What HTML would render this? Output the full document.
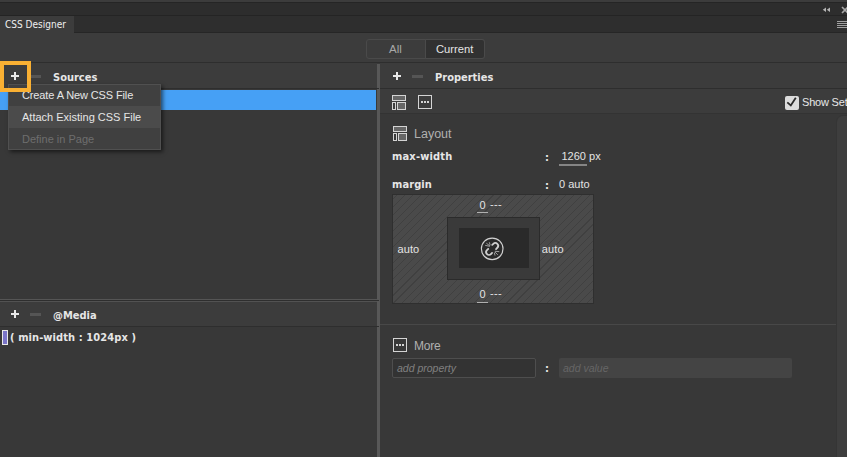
<!DOCTYPE html>
<html><head><meta charset="utf-8"><title>CSS Designer</title>
<style>
html,body{margin:0;padding:0}
body{width:847px;height:457px;overflow:hidden;position:relative;background:#3a3a3a;font-family:"Liberation Sans",sans-serif;font-size:11px;color:#d8d8d8}
.a{position:absolute}
.t{position:absolute;white-space:pre;line-height:14px;height:14px}
.b{font-family:"DejaVu Sans Condensed","DejaVu Sans",sans-serif;font-weight:700;font-stretch:condensed;font-size:11px;color:#e6e6e6}
.plus{position:absolute;width:8px;height:8px}
.plus:before{content:"";position:absolute;left:3px;top:0;width:2px;height:8px;background:#e8e8e8}
.plus:after{content:"";position:absolute;left:0;top:3px;width:8px;height:2px;background:#e8e8e8}
.minus{position:absolute;width:11px;height:3px;background:#555}
</style></head><body>
<!-- top chrome -->
<div class="a" style="left:0;top:0;width:847px;height:2px;background:#3c3c3c"></div>
<div class="a" style="left:0;top:2px;width:847px;height:1px;background:#252525"></div>
<div class="a" style="left:0;top:3px;width:847px;height:12px;background:#2d2d2d"></div>
<div class="a" style="left:0;top:15px;width:847px;height:1px;background:#242424"></div>
<div class="a" style="left:0;top:16px;width:847px;height:16px;background:#2e2e2e"></div>
<div class="a" style="left:0;top:32px;width:847px;height:1px;background:#262626"></div>
<div class="a" style="left:0;top:16px;width:74px;height:17px;background:#3c3c3c"></div>
<div class="t" style="left:5px;top:18px;font-family:'DejaVu Sans Condensed','DejaVu Sans',sans-serif;font-stretch:condensed;font-size:10px;color:#f0f0f0">CSS Designer</div>
<!-- collapse / close icons -->
<svg class="a" style="left:820px;top:5px" width="27" height="10" viewBox="0 0 27 10">
<path d="M6 2.6 L2.8 4.8 L6 7 Z M10 2.6 L6.8 4.8 L10 7 Z" fill="#b4b4b4"/>
<path d="M22 2 L28 8 M28 2 L22 8" stroke="#a8a8a8" stroke-width="1.6" fill="none"/>
</svg>
<div class="a" style="left:837px;top:21px;width:10px;height:1px;background:#a0a0a0;box-shadow:0 2px 0 #a0a0a0,0 4px 0 #a0a0a0,0 6px 0 #a0a0a0"></div>

<!-- main bg -->
<div class="a" style="left:0;top:33px;width:847px;height:29px;background:#3c3c3c"></div>
<!-- toggle -->
<div class="a" style="left:366px;top:39px;width:119px;height:20px;box-sizing:border-box;border:1px solid #4a4a4a;border-radius:3px;background:#3c3c3c"></div>
<div class="a" style="left:425px;top:39px;width:60px;height:20px;box-sizing:border-box;border:1px solid #4a4a4a;border-radius:0 3px 3px 0;background:#313131"></div>
<div class="t" style="left:389px;top:42px;font-size:11.5px;color:#a8a8a8">All</div>
<div class="t" style="left:436px;top:42px;font-size:11.2px;color:#e4e4e4">Current</div>

<!-- horizontal line under toggle -->
<div class="a" style="left:0;top:62px;width:847px;height:1px;background:#2e2e2e"></div>

<!-- LEFT: sources -->
<div class="a" style="left:0;top:63px;width:377px;height:25px;background:#3c3c3c"></div>
<div class="a" style="left:0;top:88px;width:377px;height:1px;background:#2e2e2e"></div>
<div class="a" style="left:0;top:89px;width:377px;height:210px;background:#383838"></div>
<div class="a" style="left:0;top:90px;width:376px;height:20px;background:#46a0f5"></div>
<div class="plus" style="left:11px;top:72px"></div>
<div class="minus" style="left:30px;top:75px"></div>
<div class="t b" style="left:53px;top:71px">Sources</div>

<!-- horizontal splitter -->
<div class="a" style="left:0;top:299px;width:377px;height:1px;background:#555"></div>
<div class="a" style="left:0;top:300px;width:377px;height:1px;background:#2e2e2e"></div>
<div class="a" style="left:0;top:301px;width:377px;height:1px;background:#525252"></div>
<!-- media -->
<div class="a" style="left:0;top:302px;width:377px;height:24px;background:#3c3c3c"></div>
<div class="a" style="left:0;top:326px;width:377px;height:1px;background:#2e2e2e"></div>
<div class="a" style="left:0;top:327px;width:377px;height:130px;background:#383838"></div>
<div class="plus" style="left:11px;top:310px"></div>
<div class="minus" style="left:30px;top:313px"></div>
<div class="t b" style="left:53px;top:309px">@Media</div>
<div class="a" style="left:2px;top:330px;width:6px;height:15px;box-sizing:border-box;border:1px solid #e8e8e8;background:#7a74c8"></div>
<div class="t b" style="left:10px;top:331px;font-size:11px;letter-spacing:0.09px">( min-width : 1024px )</div>

<!-- vertical splitter -->
<div class="a" style="left:377px;top:64px;width:3px;height:393px;background:#585858"></div>
<div class="a" style="left:377px;top:300px;width:2px;height:1px;background:#2e2e2e"></div>
<div class="a" style="left:377px;top:88px;width:2px;height:1px;background:#2e2e2e"></div>
<div class="a" style="left:377px;top:326px;width:2px;height:1px;background:#2e2e2e"></div>

<!-- RIGHT: properties -->
<div class="a" style="left:380px;top:63px;width:467px;height:25px;background:#3c3c3c"></div>
<div class="a" style="left:380px;top:88px;width:467px;height:1px;background:#2e2e2e"></div>
<div class="a" style="left:380px;top:89px;width:467px;height:24px;background:#3c3c3c"></div>
<div class="a" style="left:380px;top:113px;width:467px;height:1px;background:#333"></div>
<div class="a" style="left:380px;top:114px;width:467px;height:343px;background:#383838"></div>
<div class="plus" style="left:393px;top:72px"></div>
<div class="minus" style="left:412px;top:75px"></div>
<div class="t b" style="left:435px;top:71px">Properties</div>

<!-- icons row -->
<svg class="a" style="left:392px;top:95px" width="15" height="16" viewBox="0 0 15 16">
<rect x="0.5" y="0.5" width="13" height="5" fill="#666" stroke="#d4d4d4"/>
<rect x="0.5" y="7.5" width="3" height="7" fill="#3c3c3c" stroke="#d4d4d4"/>
<rect x="5.5" y="7.5" width="8" height="7" fill="#666" stroke="#d4d4d4"/>
</svg>
<svg class="a" style="left:418px;top:95px" width="14" height="14" viewBox="0 0 14 14">
<rect x="0.5" y="0.5" width="13" height="13" fill="none" stroke="#d4d4d4"/>
<rect x="3" y="6" width="2" height="2" fill="#d4d4d4"/><rect x="6" y="6" width="2" height="2" fill="#d4d4d4"/><rect x="9" y="6" width="2" height="2" fill="#d4d4d4"/>
</svg>
<!-- checkbox -->
<div class="a" style="left:785px;top:96px;width:14px;height:14px;border-radius:2px;background:#dcdcdc"></div>
<svg class="a" style="left:785px;top:96px" width="14" height="14" viewBox="0 0 14 14"><path d="M2.3 6.4 L5.8 9.5 L10.8 1.8" stroke="#2a2a2a" stroke-width="1.8" fill="none"/></svg>
<div class="t" style="left:802px;top:95px;font-size:11px;letter-spacing:-0.2px;color:#e8e8e8">Show Set</div>

<!-- scrollbar -->
<div class="a" style="left:836px;top:115px;width:11px;height:342px;background:#353535;border-radius:7px 0 0 0"></div>
<div class="a" style="left:837px;top:116px;width:10px;height:341px;background:#3e3e3e;border-radius:6px 0 0 0"></div>

<!-- Layout section -->
<svg class="a" style="left:393px;top:126px" width="15" height="16" viewBox="0 0 15 16">
<rect x="0.5" y="0.5" width="13" height="5" fill="#666" stroke="#d4d4d4"/>
<rect x="0.5" y="7.5" width="3" height="7" fill="#383838" stroke="#d4d4d4"/>
<rect x="5.5" y="7.5" width="8" height="7" fill="#666" stroke="#d4d4d4"/>
</svg>
<div class="t" style="left:414px;top:127px;font-size:12.5px;color:#b0b0b0">Layout</div>
<div class="t b" style="left:392px;top:150px;font-size:11px;letter-spacing:0.18px">max-width</div>
<div class="t b" style="left:545px;top:151px">:</div>
<div class="t" style="left:561.5px;top:149px;color:#e4e4e4">1260 px</div>
<div class="a" style="left:559px;top:164px;width:28px;height:2px;background:#858585"></div>
<div class="t b" style="left:392px;top:178px;font-size:11px;letter-spacing:0.1px">margin</div>
<div class="t b" style="left:545px;top:179px">:</div>
<div class="t" style="left:559px;top:177px;color:#e4e4e4">0 auto</div>

<!-- margin box -->
<div class="a" style="left:392px;top:194px;width:202px;height:110px;box-sizing:border-box;border:1px solid #2f2f2f;background:repeating-linear-gradient(135deg,#4a4a4a 0,#4a4a4a 2.146px,#404040 2.146px,#404040 2.946px,#4a4a4a 2.946px,#4a4a4a 5.706px)"></div>
<div class="a" style="left:447px;top:217px;width:93px;height:63px;box-sizing:border-box;border:1px solid #2b2b2b;background:#3a3a3a"></div>
<div class="a" style="left:459px;top:228px;width:70px;height:40px;background:#2a2a2a"></div>
<svg class="a" style="left:480px;top:237px" width="24" height="24" viewBox="0 0 24 24">
<circle cx="12.2" cy="11.85" r="10.8" fill="none" stroke="#d0d0d0" stroke-width="1.15"/>
<g transform="translate(12.15 11.95) rotate(-45)" fill="none" stroke="#cfcfcf" stroke-width="1.8" stroke-linecap="round">
<path d="M-2.7 -2.8 L-4.5 -2.8 A2.8 2.8 0 0 0 -4.5 2.8 L-2.9 2.8"/>
<path d="M2.7 2.8 L4.5 2.8 A2.8 2.8 0 0 0 4.5 -2.8 L2.9 -2.8"/>
</g>
<g transform="translate(12.2 11.85)" fill="none" stroke="#bdbdbd" stroke-width="0.8">
<path d="M-7 -3.5 L-2.4 -2.5 M-5.8 -5.6 L-2.3 -3 M-2.9 -6.6 L-2 -3.6"/>
<path d="M7.1 2.8 L2.6 2.4 M5.6 6 L2.8 3.2 M2.8 6.7 L2.1 3.7"/>
</g>
</svg>
<div class="t" style="left:479.5px;top:198px;color:#e4e4e4">0</div>
<div class="a" style="left:477px;top:212px;width:11px;height:1px;background:#b0b0b0"></div>
<div class="t" style="left:490px;top:197px;color:#e4e4e4;letter-spacing:0.3px">---</div>
<div class="t" style="left:479.5px;top:287px;color:#e4e4e4">0</div>
<div class="a" style="left:477px;top:302px;width:11px;height:1px;background:#b0b0b0"></div>
<div class="t" style="left:490px;top:286px;color:#e4e4e4;letter-spacing:0.3px">---</div>
<div class="t" style="left:397.5px;top:242px;color:#e4e4e4;letter-spacing:0.1px">auto</div>
<div class="t" style="left:541.7px;top:242px;color:#e4e4e4;letter-spacing:0.15px">auto</div>

<!-- separator -->
<div class="a" style="left:380px;top:324px;width:456px;height:1px;background:#484848"></div>

<!-- More -->
<svg class="a" style="left:393px;top:338px" width="14" height="14" viewBox="0 0 14 14">
<rect x="0.5" y="0.5" width="13" height="13" fill="none" stroke="#d4d4d4"/>
<rect x="3" y="6" width="2" height="2" fill="#d4d4d4"/><rect x="6" y="6" width="2" height="2" fill="#d4d4d4"/><rect x="9" y="6" width="2" height="2" fill="#d4d4d4"/>
</svg>
<div class="t" style="left:414px;top:339px;font-size:12px;letter-spacing:-0.2px;color:#b0b0b0">More</div>
<div class="a" style="left:392px;top:358px;width:144px;height:20px;box-sizing:border-box;border:1px solid #4e4e4e;border-radius:2px;background:#333"></div>
<div class="t" style="left:397px;top:361px;font-style:italic;font-size:10.5px;color:#808080">add property</div>
<div class="t b" style="left:545px;top:362px">:</div>
<div class="a" style="left:559px;top:358px;width:233px;height:20px;border-radius:2px;background:#444"></div>
<div class="t" style="left:563px;top:361px;font-style:italic;font-size:10.5px;color:#666">add value</div>

<!-- dropdown menu -->
<div class="a" style="left:8px;top:84px;width:153px;height:66px;box-sizing:border-box;border:1px solid #505050;background:#404040;box-shadow:2px 2px 4px rgba(0,0,0,.55)"></div>
<div class="a" style="left:9px;top:106px;width:151px;height:22px;background:#4b4b4b"></div>
<div class="t" style="left:22px;top:88px;color:#e6e6e6;font-size:11px;letter-spacing:-0.12px">Create A New CSS File</div>
<div class="t" style="left:22px;top:110px;color:#e6e6e6;font-size:11px">Attach Existing CSS File</div>
<div class="t" style="left:22px;top:132px;color:#6e6e6e;font-size:11px">Define in Page</div>
<!-- orange highlight -->
<div class="a" style="left:0;top:61px;width:31px;height:31px;box-sizing:border-box;border:4px solid #f9b033"></div>
</body></html>
